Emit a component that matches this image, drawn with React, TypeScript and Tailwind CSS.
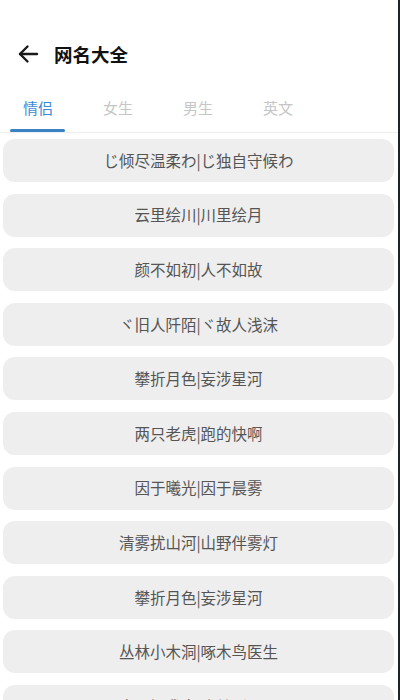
import React from "react";

const items = [
  "じ倾尽温柔わ|じ独自守候わ",
  "云里绘川|川里绘月",
  "颜不如初|人不如故",
  "ヾ旧人阡陌|ヾ故人浅沫",
  "攀折月色|妄涉星河",
  "两只老虎|跑的快啊",
  "因于曦光|因于晨雾",
  "清雾扰山河|山野伴雾灯",
  "攀折月色|妄涉星河",
  "丛林小木洞|啄木鸟医生",
  "南风知我意|吹梦到西洲",
];

const tabs = ["情侣", "女生", "男生", "英文"];

export default function App() {
  return (
    <div
      className="w-[400px] h-[700px] overflow-hidden bg-white border-r-2 border-[#1f2328]"
      style={{ fontFamily: '"Noto Sans CJK SC", "Noto Sans", sans-serif' }}
    >
      <div className="pt-[40px]">
        <div className="flex items-center h-[28px]">
          <svg
            className="ml-[17px]"
            width="23"
            height="22"
            viewBox="0 0 23 22"
            fill="none"
            stroke="#1a1a1a"
            strokeWidth="2.4"
            strokeLinecap="round"
            strokeLinejoin="round"
          >
            <path d="M3 11 H20" />
            <path d="M10.5 3.5 L3 11 L10.5 18.5" />
          </svg>
          <span className="ml-[14px] text-[18.5px] font-bold text-[#111] leading-none">
            网名大全
          </span>
        </div>
      </div>
      <div className="mt-[16px] border-b border-[#efefef]">
        <div className="flex ml-[-2px] h-[48px]">
          {tabs.map((t, i) => (
            <div key={t} className="relative w-[80px] flex items-center justify-center">
              <span
                className={
                  i === 0
                    ? "text-[15px] text-[#3b8ad4]"
                    : "text-[15px] text-[#c6c6c6]"
                }
              >
                {t}
              </span>
              {i === 0 && (
                <div className="absolute bottom-0 left-[12px] w-[55px] h-[3px] bg-[#3b82c4] rounded-full" />
              )}
            </div>
          ))}
        </div>
      </div>
      <div className="pt-[6px] ml-[3px] mr-[4px] flex flex-col gap-[11.6px]">
        {items.map((s, i) => (
          <div
            key={i}
            className="h-[43px] shrink-0 rounded-[12px] bg-[#eeeeee] flex items-center justify-center text-[15.5px] text-[#555555]"
          >
            {s}
          </div>
        ))}
      </div>
    </div>
  );
}
